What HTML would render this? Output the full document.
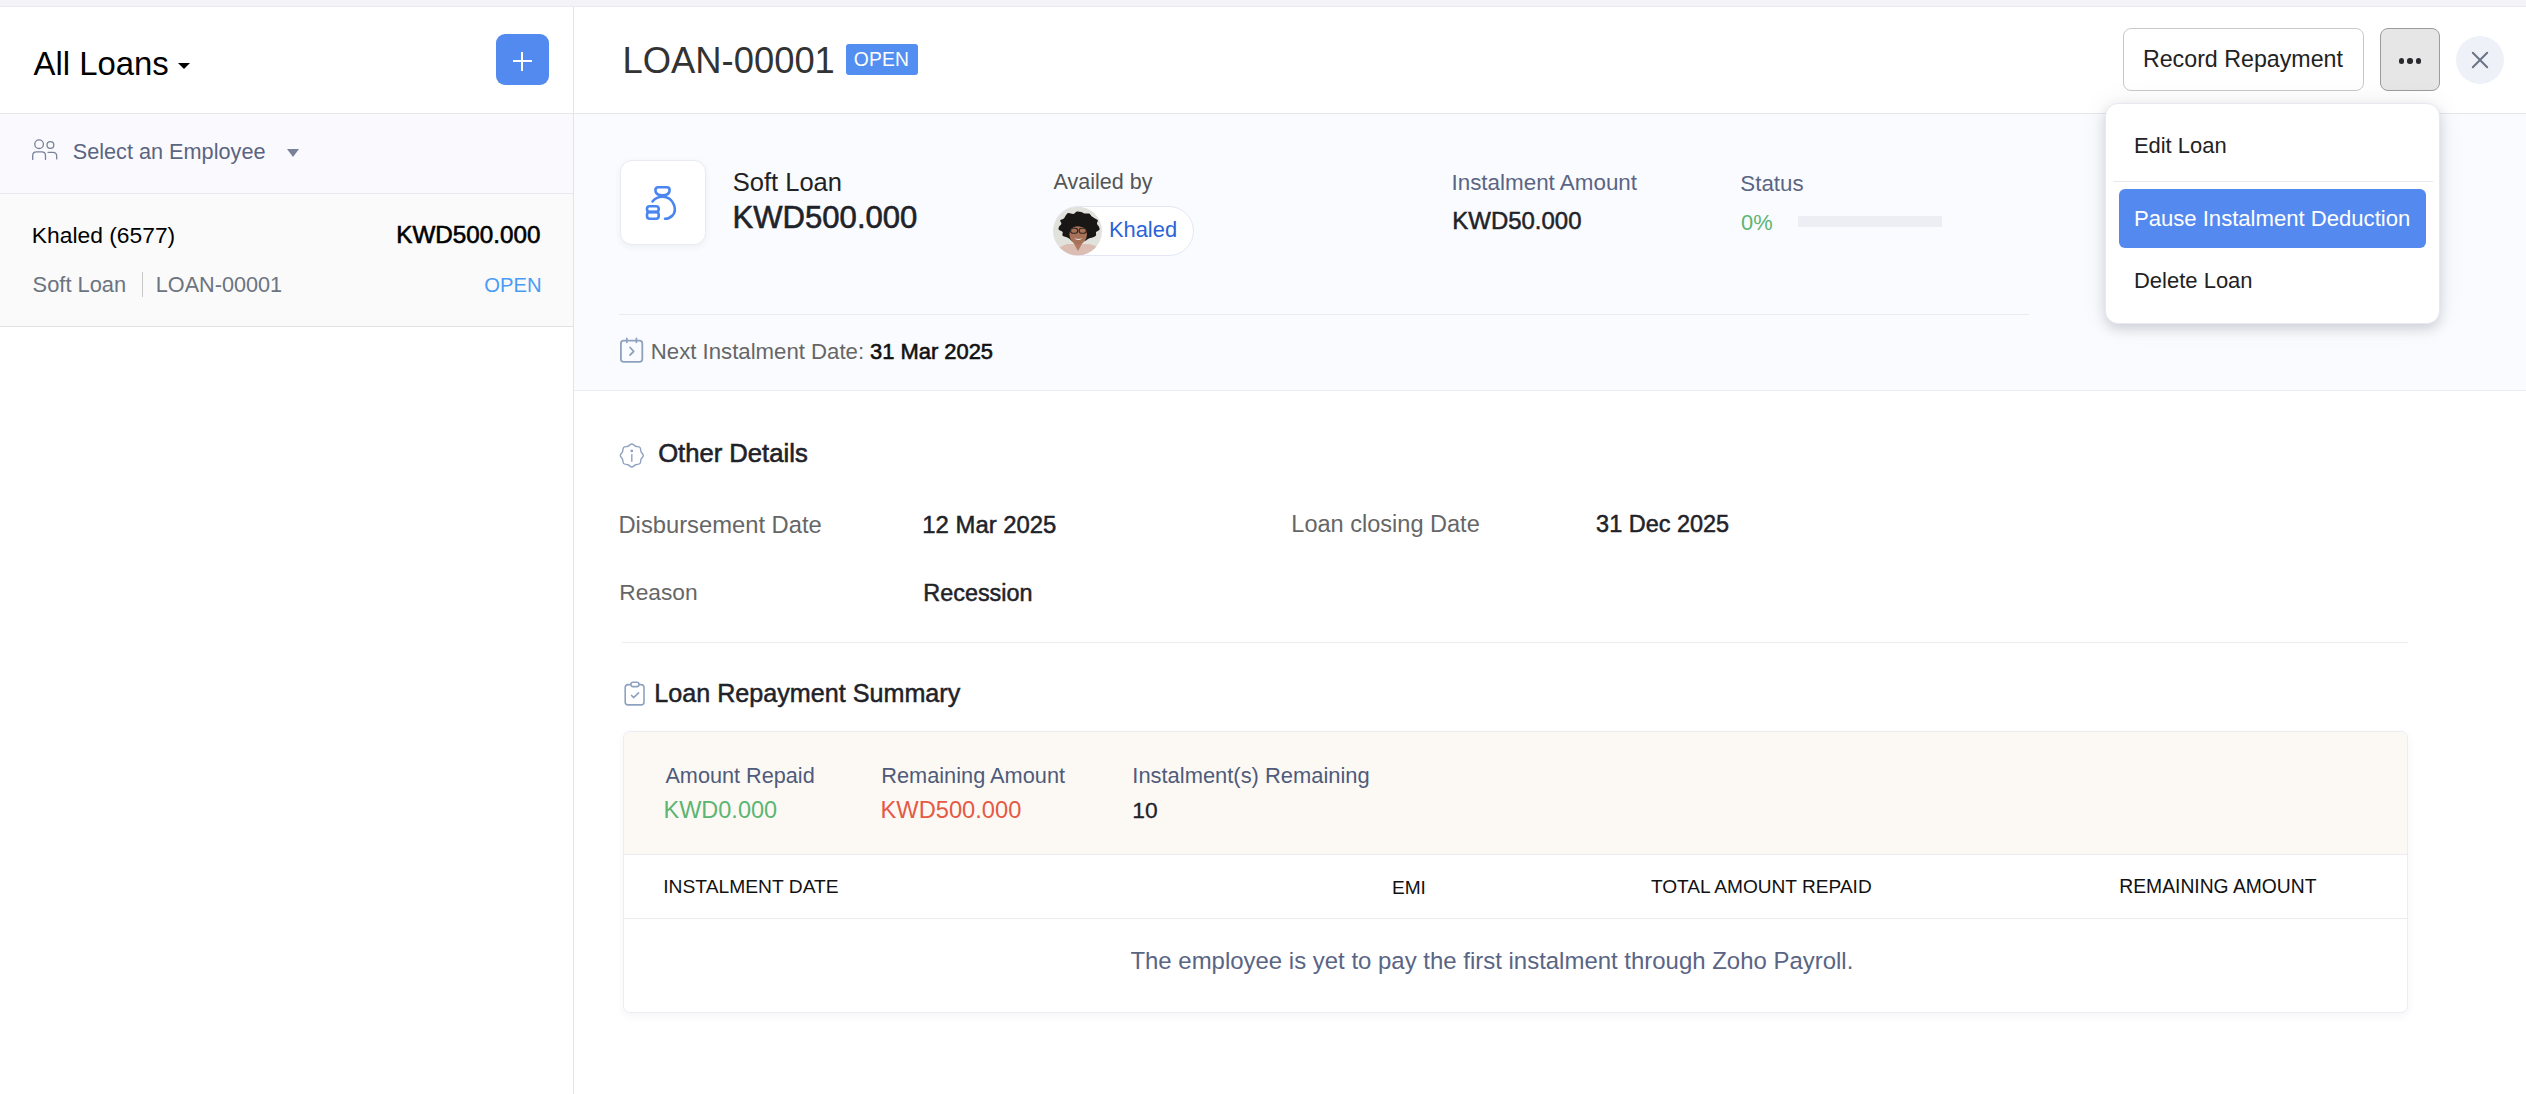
<!DOCTYPE html>
<html><head><meta charset="utf-8"><title>Loans</title>
<style>
html,body{margin:0;padding:0;}
body{width:2526px;height:1094px;position:relative;overflow:hidden;background:#fff;font-family:"Liberation Sans",sans-serif;}
.t{position:absolute;white-space:nowrap;}
.b{position:absolute;}
svg.b{overflow:visible;}
</style></head><body>
<div class="b" style="left:0px;top:0px;width:2526px;height:6px;background:#f4f4f8;"></div>
<div class="b" style="left:0px;top:6px;width:2526px;height:1px;background:#e9e9ef;"></div>
<div class="b" style="left:573px;top:7px;width:1px;height:1087px;background:#e4e4e6;"></div>
<div class="b" style="left:0px;top:113px;width:2526px;height:1px;background:#e6e6e8;"></div>
<div class="b" style="left:0px;top:114px;width:573px;height:79px;background:#fafafe;"></div>
<div class="b" style="left:0px;top:193px;width:573px;height:1px;background:#e8e8ea;"></div>
<div class="b" style="left:0px;top:194px;width:573px;height:132px;background:#fafafa;"></div>
<div class="b" style="left:0px;top:326px;width:573px;height:1px;background:#e2e2e4;"></div>
<div class="b" style="left:574px;top:114px;width:1952px;height:276px;background:#fafbfe;"></div>
<div class="b" style="left:574px;top:390px;width:1952px;height:1px;background:#eaebf3;"></div>
<div class="b" style="left:496px;top:34px;width:53px;height:51px;background:#528af0;border-radius:9px;"></div>
<div class="b" style="left:513px;top:60.2px;width:19px;height:2.1px;background:#fff;"></div>
<div class="b" style="left:521.4px;top:51.5px;width:2.1px;height:19px;background:#fff;"></div>
<svg class="b" style="left:177px;top:62px" width="14" height="8" viewBox="0 0 14 8"><path d="M1 1 L13 1 L7 7 Z" fill="#000"/></svg>
<svg class="b" style="left:28px;top:134px" width="36" height="32" viewBox="0 0 36 32" fill="none" stroke="#7a8299" stroke-width="1.3" stroke-linecap="round"><circle cx="11.1" cy="10.2" r="4.3"/><circle cx="22.4" cy="11" r="3.4"/><path d="M4.7 25.4 V21.5 Q4.7 17.9 8.5 17.9 H13.7 Q17.5 17.9 17.5 21.7 V25.4"/><path d="M20 18.3 H24.9 Q28.7 18.3 28.7 22.2 V24.9"/></svg>
<svg class="b" style="left:286px;top:148px" width="14" height="10" viewBox="0 0 14 10"><path d="M1 1 L13 1 L7 9 Z" fill="#7a8299"/></svg>
<div class="b" style="left:142px;top:272px;width:1px;height:25px;background:#c8c8c8;"></div>
<div class="b" style="left:2123px;top:28px;width:241px;height:62.5px;box-sizing:border-box;border:1px solid #c9c9cc;border-radius:8px;background:#fff;"></div>
<div class="b" style="left:2380px;top:28px;width:60px;height:62.5px;box-sizing:border-box;border:1px solid #9c9c9f;border-radius:8px;background:#e6e6e6;"></div>
<div class="b" style="left:2399.1000000000004px;top:58.2px;width:5.4px;height:5.4px;background:#2a2a2e;border-radius:50%;"></div>
<div class="b" style="left:2407.4px;top:58.2px;width:5.4px;height:5.4px;background:#2a2a2e;border-radius:50%;"></div>
<div class="b" style="left:2415.7000000000003px;top:58.2px;width:5.4px;height:5.4px;background:#2a2a2e;border-radius:50%;"></div>
<div class="b" style="left:2456px;top:36px;width:48px;height:48px;background:#eef1f7;border-radius:50%;"></div>
<svg class="b" style="left:2470px;top:50px" width="20" height="20" viewBox="0 0 20 20" fill="none" stroke="#6b7485" stroke-width="2" stroke-linecap="round"><path d="M2.8 2.8 L17.2 17.2 M17.2 2.8 L2.8 17.2"/></svg>
<div class="b" style="left:846px;top:44px;width:72px;height:31px;background:#528ff0;border-radius:3px;"></div>
<div class="b" style="left:620px;top:159.5px;width:86px;height:85px;box-sizing:border-box;background:#fff;border:1px solid #e9ebf3;border-radius:12px;box-shadow:0 2px 6px rgba(40,50,90,0.06);"></div>
<svg class="b" style="left:640px;top:180px" width="44" height="44" viewBox="0 0 44 44" fill="none" stroke="#4a86f0" stroke-width="2.6" stroke-linecap="round" stroke-linejoin="round"><path d="M18 7.3 H27 Q29.6 7.3 29.6 10.2 Q29.6 15 22.5 15.4 Q15.4 15 15.4 10.2 Q15.4 7.3 18 7.3 Z"/><path d="M12.6 21.4 Q16.5 16.8 22.5 16.8 Q30.5 16.8 33.8 24.5 Q36.5 31 32.5 35.5 Q29.5 38.7 25 38.7"/><rect x="7" y="26.3" width="11.7" height="5.6" rx="2.6"/><rect x="7" y="32.1" width="11.7" height="6.6" rx="2.6"/></svg>
<div class="b" style="left:1053px;top:206px;width:141px;height:50px;box-sizing:border-box;background:#fff;border:1px solid #e4e6f3;border-radius:25px;"></div>
<svg class="b" style="left:1053px;top:206px" width="50" height="50" viewBox="0 0 50 50"><defs><clipPath id="av"><circle cx="24.7" cy="25" r="24.3"/></clipPath></defs><g clip-path="url(#av)"><rect width="50" height="50" fill="#e2e2dc"/><path d="M0 44 L14 38 L36 38 L50 42 L50 50 L0 50 Z" fill="#dbbdb3"/><path d="M20 36 L25 45 L30 36 Z" fill="#b07a62"/><path d="M45.8 20.5 C46.2 21.5 47.0 22.8 46.5 23.7 C46.1 24.6 43.7 25.1 43.1 26.1 C42.5 27.1 43.6 28.7 43.0 29.6 C42.4 30.5 40.8 31.1 39.6 31.6 C38.3 32.1 36.7 32.1 35.5 32.7 C34.3 33.2 33.5 34.4 32.3 34.7 C31.0 35.0 29.4 34.5 28.0 34.5 C26.6 34.5 25.4 34.8 23.9 34.9 C22.5 35.1 20.7 35.7 19.5 35.3 C18.2 34.9 17.5 33.4 16.5 32.7 C15.4 32.0 14.2 31.7 13.0 31.1 C11.9 30.6 10.0 30.2 9.5 29.4 C8.9 28.5 10.2 26.8 9.6 25.9 C8.9 24.9 6.4 24.6 5.8 23.7 C5.2 22.8 5.7 21.5 6.2 20.5 C6.6 19.5 8.2 18.8 8.4 17.7 C8.6 16.7 6.8 15.2 7.2 14.3 C7.6 13.4 10.0 13.2 10.9 12.4 C11.8 11.6 12.0 10.5 12.7 9.6 C13.5 8.7 14.1 7.2 15.4 7.0 C16.7 6.7 19.0 8.1 20.4 7.9 C21.9 7.7 22.6 5.8 23.9 5.5 C25.1 5.2 26.8 5.6 28.1 6.0 C29.4 6.3 30.4 7.3 31.7 7.5 C33.1 7.8 35.0 7.1 36.1 7.6 C37.3 8.0 37.7 9.4 38.6 10.2 C39.5 10.9 40.6 11.5 41.6 12.2 C42.6 12.8 44.4 13.4 44.8 14.3 C45.2 15.2 43.8 16.7 44.0 17.7 C44.2 18.7 45.4 19.5 45.8 20.5 Z" fill="#191716"/><ellipse cx="25.2" cy="28.3" rx="8.8" ry="10.2" fill="#a87258"/><path d="M16.5 24 Q18 17.5 25.5 17.2 Q33 17.5 34 24 Q30 20.5 25.3 20.3 Q20 20.5 16.5 24 Z" fill="#191716"/><rect x="17.6" y="22.3" width="7" height="5" rx="2.2" fill="none" stroke="#2b2320" stroke-width="1.1"/><rect x="26.2" y="22.3" width="7" height="5" rx="2.2" fill="none" stroke="#2b2320" stroke-width="1.1"/><path d="M21 32.3 Q25.3 35.5 29.6 32.3 Q25.3 33.6 21 32.3 Z" fill="#f4eeea"/></g></svg>
<div class="b" style="left:1798px;top:215.6px;width:144px;height:11.3px;background:#eceef3;"></div>
<div class="b" style="left:619px;top:314px;width:1410px;height:1px;background:#e9eaf3;"></div>
<svg class="b" style="left:614px;top:332px" width="36" height="36" viewBox="0 0 36 36" fill="none" stroke="#8ea2be" stroke-width="1.8" stroke-linecap="round" stroke-linejoin="round"><rect x="6.9" y="8.6" width="21.4" height="21.2" rx="2.8"/><path d="M12.8 6.4 V10.3 M22.4 6.4 V10.3"/><path d="M16.1 15.5 L19.7 19.3 L16.1 23"/></svg>
<svg class="b" style="left:614px;top:438px" width="36" height="36" viewBox="0 0 36 36" fill="none" stroke="#8ea2c0" stroke-width="1.4" stroke-linecap="round" stroke-linejoin="round"><path d="M17.80 6.00 C19.08 6.00 20.27 7.70 21.63 8.26 C22.98 8.82 25.03 8.47 25.93 9.37 C26.83 10.27 26.48 12.32 27.04 13.67 C27.60 15.03 29.30 16.22 29.30 17.50 C29.30 18.78 27.60 19.97 27.04 21.33 C26.48 22.68 26.83 24.73 25.93 25.63 C25.03 26.53 22.98 26.18 21.63 26.74 C20.27 27.30 19.08 29.00 17.80 29.00 C16.52 29.00 15.33 27.30 13.97 26.74 C12.62 26.18 10.57 26.53 9.67 25.63 C8.77 24.73 9.12 22.68 8.56 21.33 C8.00 19.97 6.30 18.78 6.30 17.50 C6.30 16.22 8.00 15.03 8.56 13.67 C9.12 12.32 8.77 10.27 9.67 9.37 C10.57 8.47 12.62 8.82 13.97 8.26 C15.33 7.70 16.52 6.00 17.80 6.00 Z"/><path d="M17.8 16.6 V23.2"/><circle cx="17.8" cy="12.9" r="0.7" fill="#8ea2c0"/></svg>
<div class="b" style="left:622px;top:642px;width:1786px;height:1px;background:#ebebf0;"></div>
<svg class="b" style="left:618px;top:676px" width="34" height="36" viewBox="0 0 34 36" fill="none" stroke="#8ea2c0" stroke-width="1.6" stroke-linecap="round" stroke-linejoin="round"><path d="M12.5 8.6 H10.2 Q7.2 8.6 7.2 11.6 V25.9 Q7.2 28.9 10.2 28.9 H23 Q26 28.9 26 25.9 V11.6 Q26 8.6 23 8.6 H21.4"/><rect x="12.9" y="6.2" width="8.1" height="4.4" rx="2"/><path d="M13.6 19.4 L15.5 21.6 L20.6 16.8"/></svg>
<div class="b" style="left:622.5px;top:731.4px;width:1785px;height:282px;box-sizing:border-box;background:#fff;border:1px solid #ececf3;border-radius:7px;box-shadow:0 3px 8px rgba(40,50,90,0.05);overflow:hidden;"></div>
<div class="b" style="left:623.5px;top:732.4px;width:1783px;height:122px;background:#fcf9f5;border-radius:6px 6px 0 0;"></div>
<div class="b" style="left:623.5px;top:854px;width:1783px;height:1px;background:#ececf0;"></div>
<div class="b" style="left:623.5px;top:918px;width:1783px;height:1px;background:#ececf0;"></div>
<div class="b" style="left:2105px;top:102.5px;width:335px;height:221px;box-sizing:border-box;background:#fff;border:1px solid #e8e8f0;border-radius:13px;box-shadow:0 5px 12px rgba(20,25,50,0.15),0 0 28px rgba(20,25,50,0.07);"></div>
<div class="b" style="left:2113px;top:181px;width:320px;height:1px;background:#e8e8ee;"></div>
<div class="b" style="left:2119px;top:189.4px;width:307px;height:58.3px;background:#548af0;border-radius:6px;"></div>
<div class="t" style="left:33.50px;top:47.94px;font-size:32.9px;line-height:32.9px;color:#000;">All Loans</div>
<div class="t" style="left:72.74px;top:140.64px;font-size:21.68px;line-height:21.68px;color:#5a6581;">Select an Employee</div>
<div class="t" style="left:31.86px;top:224.48px;font-size:22.82px;line-height:22.82px;color:#000;">Khaled (6577)</div>
<div class="t" style="left:396.36px;top:222.68px;font-size:24.23px;line-height:24.23px;color:#000;-webkit-text-stroke:0.6px #000;">KWD500.000</div>
<div class="t" style="left:32.62px;top:273.50px;font-size:21.85px;line-height:21.85px;color:#6b7480;">Soft Loan</div>
<div class="t" style="left:155.78px;top:273.67px;font-size:21.65px;line-height:21.65px;color:#6b7480;">LOAN-00001</div>
<div class="t" style="left:484.24px;top:274.86px;font-size:20.24px;line-height:20.24px;color:#4a9bf5;">OPEN</div>
<div class="t" style="left:622.60px;top:43.41px;font-size:36.37px;line-height:36.37px;color:#333;">LOAN-00001</div>
<div class="t" style="left:853.70px;top:49.77px;font-size:19.29px;line-height:19.29px;color:#fff;letter-spacing:0.2px;">OPEN</div>
<div class="t" style="left:2142.94px;top:48.33px;font-size:23.23px;line-height:23.23px;color:#222;">Record Repayment</div>
<div class="t" style="left:2133.94px;top:134.73px;font-size:21.93px;line-height:21.93px;color:#222;">Edit Loan</div>
<div class="t" style="left:2133.94px;top:207.69px;font-size:22.1px;line-height:22.1px;color:#fff;">Pause Instalment Deduction</div>
<div class="t" style="left:2133.94px;top:269.76px;font-size:22.01px;line-height:22.01px;color:#222;">Delete Loan</div>
<div class="t" style="left:732.78px;top:170.01px;font-size:25.5px;line-height:25.5px;color:#222;">Soft Loan</div>
<div class="t" style="left:732.56px;top:202.48px;font-size:31.09px;line-height:31.09px;color:#1f2329;-webkit-text-stroke:0.6px #1f2329;">KWD500.000</div>
<div class="t" style="left:1053.46px;top:171.76px;font-size:21.54px;line-height:21.54px;color:#555;">Availed by</div>
<div class="t" style="left:1108.98px;top:219.28px;font-size:21.87px;line-height:21.87px;color:#2b63d9;">Khaled</div>
<div class="t" style="left:1451.48px;top:171.93px;font-size:22.41px;line-height:22.41px;color:#5a6585;">Instalment Amount</div>
<div class="t" style="left:1740.32px;top:172.60px;font-size:22.32px;line-height:22.32px;color:#5a6585;">Status</div>
<div class="t" style="left:1452.28px;top:209.41px;font-size:23.97px;line-height:23.97px;color:#1f2329;-webkit-text-stroke:0.5px #1f2329;">KWD50.000</div>
<div class="t" style="left:1741.12px;top:211.80px;font-size:21.85px;line-height:21.85px;color:#5cb572;">0%</div>
<div class="t" style="left:650.78px;top:340.60px;font-size:22.2px;line-height:22.2px;color:#666;">Next Instalment Date:</div>
<div class="t" style="left:870.04px;top:340.85px;font-size:21.91px;line-height:21.91px;color:#111;-webkit-text-stroke:0.6px #111;">31 Mar 2025</div>
<div class="t" style="left:658.16px;top:441.30px;font-size:25.63px;line-height:25.63px;color:#1f2329;-webkit-text-stroke:0.6px #1f2329;">Other Details</div>
<div class="t" style="left:618.48px;top:513.09px;font-size:23.75px;line-height:23.75px;color:#666;">Disbursement Date</div>
<div class="t" style="left:922.32px;top:512.97px;font-size:23.89px;line-height:23.89px;color:#1f2329;-webkit-text-stroke:0.5px #1f2329;">12 Mar 2025</div>
<div class="t" style="left:1291.36px;top:513.27px;font-size:23.54px;line-height:23.54px;color:#666;">Loan closing Date</div>
<div class="t" style="left:1596.12px;top:513.34px;font-size:23.46px;line-height:23.46px;color:#1f2329;-webkit-text-stroke:0.5px #1f2329;">31 Dec 2025</div>
<div class="t" style="left:619.28px;top:580.85px;font-size:22.74px;line-height:22.74px;color:#666;">Reason</div>
<div class="t" style="left:923.32px;top:581.60px;font-size:23.39px;line-height:23.39px;color:#1f2329;-webkit-text-stroke:0.5px #1f2329;">Recession</div>
<div class="t" style="left:654.28px;top:681.11px;font-size:25.15px;line-height:25.15px;color:#1f2329;-webkit-text-stroke:0.5px #1f2329;">Loan Repayment Summary</div>
<div class="t" style="left:665.42px;top:764.96px;font-size:21.66px;line-height:21.66px;color:#4f5b7a;">Amount Repaid</div>
<div class="t" style="left:663.48px;top:799.49px;font-size:23.51px;line-height:23.51px;color:#5cb572;">KWD0.000</div>
<div class="t" style="left:881.28px;top:764.88px;font-size:21.75px;line-height:21.75px;color:#4f5b7a;">Remaining Amount</div>
<div class="t" style="left:880.48px;top:798.64px;font-size:23.69px;line-height:23.69px;color:#e55a45;">KWD500.000</div>
<div class="t" style="left:1132.32px;top:764.75px;font-size:21.91px;line-height:21.91px;color:#4f5b7a;">Instalment(s) Remaining</div>
<div class="t" style="left:1132.24px;top:799.38px;font-size:22.82px;line-height:22.82px;color:#1f2329;-webkit-text-stroke:0.3px #1f2329;">10</div>
<div class="t" style="left:663.24px;top:876.69px;font-size:19.26px;line-height:19.26px;color:#111;">INSTALMENT DATE</div>
<div class="t" style="left:1391.90px;top:877.83px;font-size:19.1px;line-height:19.1px;color:#111;">EMI</div>
<div class="t" style="left:1650.88px;top:876.82px;font-size:19.11px;line-height:19.11px;color:#111;">TOTAL AMOUNT REPAID</div>
<div class="t" style="left:2119.28px;top:876.65px;font-size:19.31px;line-height:19.31px;color:#111;">REMAINING AMOUNT</div>
<div class="t" style="left:1130.42px;top:948.51px;font-size:23.96px;line-height:23.96px;color:#5a6585;">The employee is yet to pay the first instalment through Zoho Payroll.</div>
</body></html>
